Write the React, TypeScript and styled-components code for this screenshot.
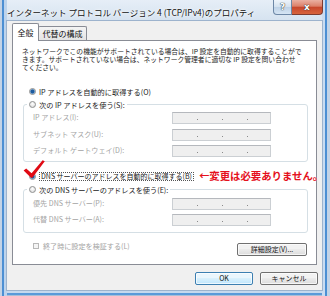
import React from 'react';
import styled, { createGlobalStyle } from 'styled-components';

const FONT = `"Noto Sans CJK JP", "Noto Sans", sans-serif`;

const GlobalStyle = createGlobalStyle`
    html, body {
        margin: 0;
        padding: 0;
    }
    body {
        width: 330px;
        height: 296px;
        overflow: hidden;
        background: #fff;
    }
`;

const Window = styled.div`
    box-sizing: border-box;
    width: 330px;
    height: 296px;
    display: flex;
    flex-direction: column;
    padding: 0 8px 6px 7px;
    font-family: ${FONT};
    background:
        linear-gradient(to right, #c3d3e6 0 2px, #4c8fd3 2px 4px, #bcd3ec 4px 7px, transparent 7px) left top / 7px 100% no-repeat,
        linear-gradient(to left, #c3d3e6 0 3px, #4c8fd3 3px 5px, #c9dcf1 5px 8px, transparent 8px) right top / 8px 100% no-repeat,
        linear-gradient(to top, #a9bfd8 0 1px, #5a9ad9 1px 3px, #c6d9ee 3px 6px, transparent 6px) left bottom / 100% 6px no-repeat,
        linear-gradient(#e6eef7, #d6e3f0 20px, #c6d8ec);
`;

const TitleBar = styled.div`
    height: 21px;
    display: flex;
    align-items: flex-start;
`;

const Title = styled.div`
    flex: 1;
    padding-top: 6px;
    font-size: 8.5px;
    line-height: 12px;
    color: #111;
    white-space: nowrap;
    text-shadow: 0 0 4px #fff, 0 0 2px #fff;
`;

const Controls = styled.div`
    display: flex;
    margin-right: -1px;
`;

const CaptionButton = styled.div<{ $close?: boolean }>`
    box-sizing: border-box;
    width: ${(p) => (p.$close ? 31 : 19)}px;
    height: 15px;
    display: flex;
    align-items: center;
    justify-content: center;
    border: 1px solid ${(p) => (p.$close ? '#7d3b2f' : '#6d87a6')};
    border-top: none;
    border-left: ${(p) => (p.$close ? 'none' : undefined)};
    border-radius: ${(p) => (p.$close ? '0 0 4px 0' : '0 0 0 4px')};
    background: ${(p) =>
        p.$close
            ? 'linear-gradient(#eab0a2, #dc8069 45%, #c7462c 50%, #d7633c)'
            : 'linear-gradient(#eef4fa, #d3e1ef 50%, #bdd1e6 50%, #d6e5f4)'};
    color: #fff;
    font-family: "DejaVu Sans", sans-serif;
    font-weight: 700;
    font-size: 9px;
    text-shadow: 0 0 1px #233, 0 0 1px #233;
`;

const Client = styled.div`
    flex: 1;
    display: flex;
    flex-direction: column;
    background: #f0f0f0;
    padding: 2px 4px 5px 5px;
    box-shadow: 0 0 0 1px #9db3cd;
`;

const TabList = styled.div`
    display: flex;
    align-items: flex-start;
    height: 18px;
    position: relative;
    z-index: 1;
`;

const Tab = styled.div<{ $active?: boolean }>`
    box-sizing: border-box;
    position: relative;
    z-index: ${(p) => (p.$active ? 2 : 1)};
    display: flex;
    align-items: center;
    justify-content: center;
    width: ${(p) => (p.$active ? 27 : 49)}px;
    height: ${(p) => (p.$active ? 18 : 14)}px;
    margin: ${(p) => (p.$active ? '0' : '3px 0 0 -1px')};
    border: 1px solid #898c95;
    border-bottom: none;
    border-radius: 2px 2px 0 0;
    background: ${(p) => (p.$active ? '#fff' : 'linear-gradient(#f4f4f4, #e4e4e4)')};
    font-size: 8px;
    line-height: 1;
    color: #111;
    white-space: nowrap;
`;

const Panel = styled.div`
    display: flex;
    flex-direction: column;
    margin: -1px 1px 0 0;
    border: 1px solid #898c95;
    background: #fff;
    padding: 0 9px 8px 10px;
`;

const Description = styled.p`
    margin: 6px 0 0 -1px;
    font-size: 6.8px;
    line-height: 8.2px;
    color: #222;
    white-space: nowrap;
`;

const OptionRow = styled.div<{ $top: number }>`
    position: relative;
    display: flex;
    align-items: center;
    gap: 3px;
    height: 9px;
    margin: ${(p) => p.$top}px 0 0 6px;
    font-size: 7.2px;
    color: #1a1a1a;
    white-space: nowrap;
`;

const Radio = styled.span<{ $checked?: boolean }>`
    box-sizing: border-box;
    flex: none;
    width: 7px;
    height: 7px;
    border-radius: 50%;
    border: 1px solid #8e8f8f;
    background: ${(p) =>
        p.$checked
            ? 'radial-gradient(circle, #1d5b9e 0 1.5px, #6fa3d6 2.2px, #e8eff7 2.6px)'
            : 'radial-gradient(circle at 50% 35%, #ffffff, #d6d6d6)'};
`;

const FocusLabel = styled.span`
    border: 1px dotted #555;
    padding: 0 1px;
    font-size: 7px;
    line-height: 7px;
`;

const Note = styled.span`
    margin-left: 2px;
    font-size: 10.4px;
    font-weight: 700;
    line-height: 1;
    color: #e5101c;
`;

const Check = styled.svg`
    position: absolute;
    left: -6px;
    top: -11.5px;
    width: 22px;
    height: 18px;
`;

const GroupBox = styled.div<{ $top: number; $bottom: number }>`
    margin: ${(p) => p.$top}px -1px 0 0;
    border: 1px solid #d5dfe5;
    border-radius: 3px;
    padding-bottom: ${(p) => p.$bottom}px;
`;

const Legend = styled.div`
    display: flex;
    align-items: center;
    gap: 3px;
    width: fit-content;
    height: 9px;
    margin: -5px 0 0 3px;
    padding: 0 2px;
    background: #fff;
    font-size: 7.2px;
    color: #1a1a1a;
    white-space: nowrap;
`;

const FieldGrid = styled.div<{ $top: number; $gap: number }>`
    display: grid;
    grid-template-columns: 139px 99px;
    row-gap: ${(p) => p.$gap}px;
    align-items: center;
    margin-top: ${(p) => p.$top}px;
    padding-left: 9px;
`;

const FieldLabel = styled.span`
    font-size: 7.1px;
    line-height: 1;
    color: #a3a3a3;
    white-space: nowrap;
`;

const AddressBox = styled.div`
    box-sizing: border-box;
    display: flex;
    align-items: flex-end;
    gap: 24px;
    width: 99px;
    height: 12px;
    padding: 0 0 3px 24px;
    border: 1px solid #cbcfd3;
    border-top-color: #b5b8bd;
    background: #efefef;
`;

const Dot = styled.span`
    width: 1px;
    height: 1px;
    background: #8a8a8a;
`;

const BottomRow = styled.div`
    display: flex;
    align-items: flex-start;
    justify-content: space-between;
    margin-top: 10.5px;
`;

const CheckItem = styled.div`
    display: flex;
    align-items: center;
    gap: 4px;
    height: 8px;
    margin: -1px 0 0 10px;
    font-size: 7.1px;
    color: #a3a3a3;
    white-space: nowrap;
`;

const CheckBox = styled.span`
    box-sizing: border-box;
    width: 6px;
    height: 6px;
    border: 1px solid #b8b8b8;
    background: #f5f5f5;
`;

const Button = styled.div<{ $width: number; $default?: boolean }>`
    box-sizing: border-box;
    width: ${(p) => p.$width}px;
    height: 13px;
    border: 1px solid ${(p) => (p.$default ? '#3c7fb1' : '#707070')};
    border-radius: 2px;
    background: ${(p) =>
        p.$default
            ? 'linear-gradient(#eaf6fd 0 50%, #d9f0fc 50%, #bee6fd)'
            : 'linear-gradient(#f2f2f2 0 50%, #ebebeb 50%, #dcdcdc)'};
    box-shadow: inset 0 0 0 1px rgba(255, 255, 255, 0.7);
    font-size: 7px;
    line-height: 11px;
    text-align: center;
    color: #111;
    white-space: nowrap;
`;

const Footer = styled.div`
    display: flex;
    justify-content: flex-end;
    gap: 7px;
    margin-top: 7px;
`;

const Address = () => (
    <AddressBox>
        <Dot />
        <Dot />
        <Dot />
    </AddressBox>
);

const App = () => {
    return (
        <>
            <GlobalStyle />
            <Window>
                <TitleBar>
                    <Title>インターネット プロトコル バージョン 4 (TCP/IPv4)のプロパティ</Title>
                    <Controls>
                        <CaptionButton>?</CaptionButton>
                        <CaptionButton $close>x</CaptionButton>
                    </Controls>
                </TitleBar>
                <Client>
                    <TabList>
                        <Tab $active>全般</Tab>
                        <Tab>代替の構成</Tab>
                    </TabList>
                    <Panel>
                        <Description>
                            ネットワークでこの機能がサポートされている場合は、IP 設定を自動的に取得することがで
                            <br />
                            きます。サポートされていない場合は、ネットワーク管理者に適切な IP 設定を問い合わせ
                            <br />
                            てください。
                        </Description>

                        <OptionRow $top={15.4}>
                            <Radio $checked />
                            IP アドレスを自動的に取得する(O)
                        </OptionRow>
                        <GroupBox $top={8} $bottom={4}>
                            <Legend>
                                <Radio />
                                次の IP アドレスを使う(S):
                            </Legend>
                            <FieldGrid $top={3} $gap={4.5}>
                                <FieldLabel>IP アドレス(I):</FieldLabel>
                                <Address />
                                <FieldLabel>サブネット マスク(U):</FieldLabel>
                                <Address />
                                <FieldLabel>デフォルト ゲートウェイ(D):</FieldLabel>
                                <Address />
                            </FieldGrid>
                        </GroupBox>

                        <OptionRow $top={9.5}>
                            <Radio $checked />
                            <FocusLabel>DNS サーバーのアドレスを自動的に取得する(B)</FocusLabel>
                            <Note>←変更は必要ありません。</Note>
                            <Check viewBox="0 0 22 18">
                                <path
                                    d="M0.6 10.6 L3.2 8.4 L8.6 13.2 L19.6 0.2 L21.8 1.2 L9.4 17.8 L8 17.8 Z"
                                    fill="#e00a14"
                                />
                            </Check>
                        </OptionRow>
                        <GroupBox $top={8.5} $bottom={5.5}>
                            <Legend>
                                <Radio />
                                次の DNS サーバーのアドレスを使う(E):
                            </Legend>
                            <FieldGrid $top={4} $gap={4}>
                                <FieldLabel>優先 DNS サーバー(P):</FieldLabel>
                                <Address />
                                <FieldLabel>代替 DNS サーバー(A):</FieldLabel>
                                <Address />
                            </FieldGrid>
                        </GroupBox>

                        <BottomRow>
                            <CheckItem>
                                <CheckBox />
                                終了時に設定を検証する(L)
                            </CheckItem>
                            <Button $width={70}>詳細設定(V)...</Button>
                        </BottomRow>
                    </Panel>
                    <Footer>
                        <Button $width={58} $default>
                            OK
                        </Button>
                        <Button $width={58}>キャンセル</Button>
                    </Footer>
                </Client>
            </Window>
        </>
    );
};

export default App;
